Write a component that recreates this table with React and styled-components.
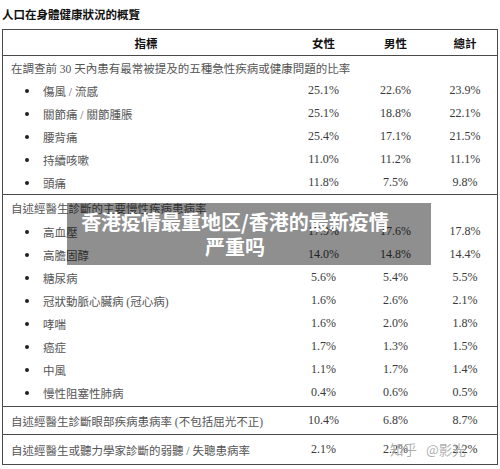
import React from "react";
import styled, { createGlobalStyle } from "styled-components";

const Global = createGlobalStyle`
  html, body {
    margin: 0;
    padding: 0;
    background: #fff;
  }
  body {
    font-family: "Liberation Serif", "Noto Sans CJK TC", serif;
  }
`;

const Page = styled.div`
  position: relative;
  width: 500px;
  height: 469px;
  overflow: hidden;
  background: #fff;
`;

const Title = styled.h1`
  margin: 0;
  height: 29px;
  padding: 7px 0 0 2px;
  box-sizing: border-box;
  font-family: "Noto Sans CJK TC", sans-serif;
  font-size: 11.5px;
  font-weight: 700;
  line-height: 14px;
  color: #111;
`;

const Table = styled.div`
  margin: 0 2px;
  border: 1px solid #4a4a4a;
`;

const grid = `
  display: grid;
  grid-template-columns: 286px 69px 75px 1fr;
  align-items: center;
`;

const HeadRow = styled.div`
  ${grid}
  height: 25px;
  border-bottom: 1px solid #4a4a4a;
  font-family: "Noto Sans CJK TC", sans-serif;
  font-weight: 700;
  font-size: 11.5px;
  color: #111;
  text-align: center;
`;

const Section = styled.div`
  border-bottom: ${(p) => (p.last ? "none" : "1px solid #4a4a4a")};
  padding-bottom: ${(p) => p.pad || 0}px;
`;

const Caption = styled.div`
  height: ${(p) => p.h || 23}px;
  padding-left: 8px;
  display: flex;
  align-items: center;
  font-size: 11.5px;
  color: #555;
  white-space: nowrap;
`;

const Row = styled.div`
  ${grid}
  height: ${(p) => p.h || 23}px;
`;

const Label = styled.div`
  position: relative;
  padding-left: ${(p) => (p.bullet ? 40 : 8)}px;
  font-size: 11.5px;
  color: #555;
  white-space: nowrap;

  &::before {
    content: "";
    display: ${(p) => (p.bullet ? "block" : "none")};
    position: absolute;
    left: 22px;
    top: 50%;
    width: 4px;
    height: 4px;
    margin-top: -2px;
    border-radius: 50%;
    background: #222;
  }
`;

const Num = styled.div`
  text-align: center;
  font-size: 12px;
  color: #3a3a3a;
`;

const Overlay = styled.div`
  position: absolute;
  left: 67px;
  top: 203px;
  width: 364px;
  height: 62px;
  box-sizing: border-box;
  padding: 6px 38px 6px 10px;
  background: rgba(0, 0, 0, 0.44);
  color: #fff;
  text-align: center;
  font-family: "Noto Sans CJK SC", sans-serif;
  font-weight: 700;
  font-size: 20px;
  line-height: 25px;
`;

const Watermark = styled.div`
  position: absolute;
  left: 390px;
  top: 440px;
  font-family: "Noto Sans CJK SC", sans-serif;
  font-size: 13.5px;
  line-height: 18px;
  color: rgba(160, 160, 160, 0.85);
  white-space: nowrap;
  word-spacing: 6px;
`;

const acute = [
  ["傷風 / 流感", "25.1%", "22.6%", "23.9%"],
  ["關節痛 / 關節腫脹", "25.1%", "18.8%", "22.1%"],
  ["腰背痛", "25.4%", "17.1%", "21.5%"],
  ["持續咳嗽", "11.0%", "11.2%", "11.1%"],
  ["頭痛", "11.8%", "7.5%", "9.8%"],
];

const chronic = [
  ["高血壓", "17.9%", "17.6%", "17.8%"],
  ["高膽固醇", "14.0%", "14.8%", "14.4%"],
  ["糖尿病", "5.6%", "5.4%", "5.5%"],
  ["冠狀動脈心臟病 (冠心病)", "1.6%", "2.6%", "2.1%"],
  ["哮喘", "1.6%", "2.0%", "1.8%"],
  ["癌症", "1.7%", "1.3%", "1.5%"],
  ["中風", "1.1%", "1.7%", "1.4%"],
  ["慢性阻塞性肺病", "0.4%", "0.6%", "0.5%"],
];

const DataRow = ({ cells, bullet, h }) => (
  <Row h={h}>
    <Label bullet={bullet}>{cells[0]}</Label>
    <Num>{cells[1]}</Num>
    <Num>{cells[2]}</Num>
    <Num>{cells[3]}</Num>
  </Row>
);

const App = () => {
  return (
    <Page>
      <Global />
      <Title>人口在身體健康狀況的概覽</Title>
      <Table>
        <HeadRow>
          <div>指標</div>
          <div>女性</div>
          <div>男性</div>
          <div>總計</div>
        </HeadRow>

        <Section>
          <Caption>在調查前 30 天內患有最常被提及的五種急性疾病或健康問題的比率</Caption>
          {acute.map((r) => (
            <DataRow key={r[0]} cells={r} bullet />
          ))}
        </Section>

        <Section pad={2}>
          <Caption h={25}>自述經醫生診斷的主要慢性疾病患病率</Caption>
          {chronic.map((r) => (
            <DataRow key={r[0]} cells={r} bullet />
          ))}
        </Section>

        <Section>
          <DataRow
            h={27}
            cells={["自述經醫生診斷眼部疾病患病率 (不包括屈光不正)", "10.4%", "6.8%", "8.7%"]}
          />
        </Section>

        <Section last>
          <DataRow
            h={29}
            cells={["自述經醫生或聽力學家診斷的弱聽 / 失聰患病率", "2.1%", "2.2%", "2.2%"]}
          />
        </Section>
      </Table>

      <Overlay>香港疫情最重地区/香港的最新疫情严重吗</Overlay>
      <Watermark>知乎 @影光</Watermark>
    </Page>
  );
};

export default App;
